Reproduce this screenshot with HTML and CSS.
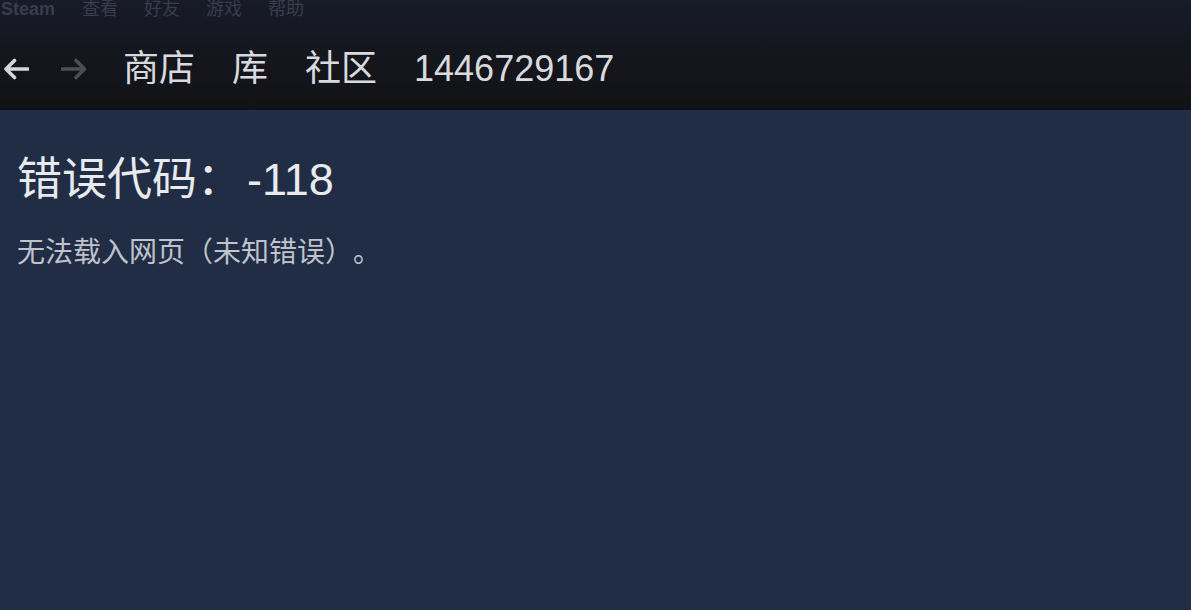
FILE: index.html
```html
<!DOCTYPE html>
<html lang="zh-CN">
<head>
<meta charset="utf-8">
<title>Steam</title>
<link rel="stylesheet" href="styles.css">
</head>
<body>
<header class="titlebar">
  <div class="menu">
    <span class="menu-item steam">Steam</span>
    <span class="menu-item">查看</span>
    <span class="menu-item">好友</span>
    <span class="menu-item">游戏</span>
    <span class="menu-item">帮助</span>
  </div>
  <nav class="nav">
    <svg class="arrow back" width="26" height="22" viewBox="0 0 26 22"><path d="M25 11H3M11.5 2.5L3 11l8.5 8.5" fill="none" stroke="currentColor" stroke-width="3.6" stroke-linecap="round" stroke-linejoin="round"/></svg>
    <svg class="arrow fwd" width="27" height="22" viewBox="0 0 27 22"><path d="M1 11h22M15 2.5L23.5 11L15 19.5" fill="none" stroke="currentColor" stroke-width="3.6" stroke-linecap="round" stroke-linejoin="round"/></svg>
    <span class="nav-item first">商店</span>
    <span class="nav-item">库</span>
    <span class="nav-item">社区</span>
    <span class="nav-item">1446729167</span>
  </nav>
</header>
<main class="content">
  <h1 class="title">错误代码：<span class="code">-118</span></h1>
  <p class="desc">无法载入网页（未知错误）。</p>
</main>
</body>
</html>
```
FILE: styles.css
```css
html, body {
  margin: 0;
  padding: 0;
  height: 100%;
}
body {
  background: #212c45;
  font-family: "Liberation Sans", "Noto Sans CJK SC", sans-serif;
  overflow: hidden;
  text-spacing-trim: space-all;
}
.titlebar {
  height: 108px;
  background: linear-gradient(#181b28 0%, #15171f 45%, #121316 100%);
  border-bottom: 2px solid #0e121b;
  display: flex;
  flex-direction: column;
  overflow: hidden;
}
.menu {
  display: flex;
  height: 18px;
  margin-top: 0;
  line-height: 18px;
  font-size: 18px;
  color: #393d4d;
  padding-left: 1px;
}
.menu-item {
  margin-right: 26px;
  white-space: nowrap;
}
.menu-item.steam {
  font-weight: bold;
  margin-right: 27px;
}
.nav {
  display: flex;
  align-items: center;
  height: 40px;
  margin-top: 31px;
  padding-left: 3px;
}
.arrow.back {
  color: #d6d7da;
}
.arrow.fwd {
  color: #4c4e55;
  margin-left: 32px;
}
.nav-item {
  font-size: 36px;
  line-height: 40px;
  color: #d8dadf;
  margin-left: 37px;
  white-space: nowrap;
}
.nav-item.first {
  margin-left: 35px;
}
.content {
  padding: 0 17px;
}
.title {
  margin: 43px 0 0;
  font-size: 45px;
  line-height: 54px;
  font-weight: normal;
  color: #e8eaee;
}
.code {
  margin-left: 5px;
}
.desc {
  margin: 29px 0 0;
  font-size: 28px;
  line-height: 34px;
  color: #bfc3cc;
}
```
